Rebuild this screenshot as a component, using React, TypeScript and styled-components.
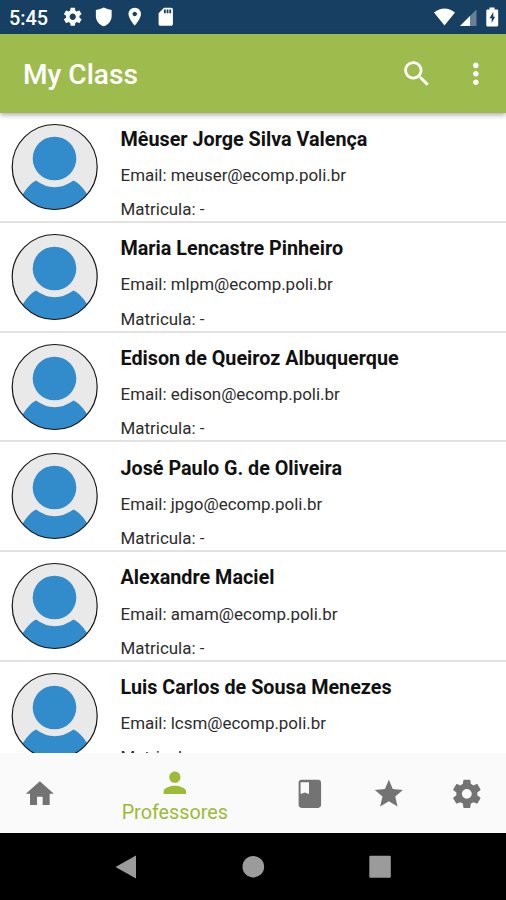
import React from "react";
import styled, { createGlobalStyle } from "styled-components";

const GlobalStyle = createGlobalStyle`
  * { box-sizing: border-box; }
  html, body { margin: 0; padding: 0; background: #fff; }
  body { font-family: Roboto, "Liberation Sans", sans-serif; overflow: hidden; }
`;

const Screen = styled.div`
  width: 506px;
  height: 900px;
  display: flex;
  flex-direction: column;
  overflow: hidden;
  background: #fff;
`;

const StatusBar = styled.header`
  flex: 0 0 34px;
  display: flex;
  align-items: center;
  justify-content: space-between;
  padding: 0 4px 0 9px;
  background: #163f62;
  color: #fff;
`;

const StatusGroup = styled.div<{ $gap: number }>`
  display: flex;
  align-items: center;
  gap: ${(p) => p.$gap}px;
`;

const Clock = styled.span`
  width: 43px;
  font-size: 19.9px;
  font-weight: 500;
  line-height: 28px;
  padding-top: 4px;
`;

const AppBar = styled.div`
  position: relative;
  z-index: 1;
  flex: 0 0 79px;
  display: flex;
  align-items: center;
  padding: 0 13px 0 23px;
  background: #9ebb4e;
  color: #fff;
  box-shadow: 0 2px 5px rgba(0, 0, 0, 0.32);
`;

const Title = styled.h1`
  flex: 1;
  margin: 0;
  padding-top: 3px;
  font-size: 28.1px;
  font-weight: 500;
  line-height: 36px;
`;

const Actions = styled.div`
  display: flex;
  gap: 26px;
`;

const List = styled.ul`
  flex: 1 1 0;
  min-height: 0;
  margin: 0;
  padding: 0.4px 0 0;
  list-style: none;
  overflow: hidden;
`;

const Row = styled.li`
  height: 109.7px;
  display: flex;
  gap: 21.5px;
  padding: 10px 0 0 11px;
  border-bottom: 2px solid #e2e2e2;
`;

const Details = styled.div`
  display: flex;
  flex-direction: column;
`;

const Name = styled.strong`
  margin-top: 3.2px;
  font-size: 19.75px;
  font-weight: 700;
  line-height: 26px;
  color: #111;
  white-space: nowrap;
`;

const Info = styled.span`
  margin-top: 10.2px;
  font-size: 16.96px;
  font-weight: 400;
  line-height: 24px;
  color: #2c2c2c;
  white-space: nowrap;
`;

const BottomNav = styled.nav`
  flex: 0 0 80px;
  display: flex;
  background: #fafafa;
`;

const Tab = styled.button<{ $active?: boolean }>`
  flex: ${(p) => (p.$active ? "1 1 0" : "0 0 78.7px")};
  display: flex;
  flex-direction: column;
  align-items: center;
  justify-content: ${(p) => (p.$active ? "flex-start" : "center")};
  padding: ${(p) => (p.$active ? "13px 0 0 1px" : "1px 0 0 1px")};
  border: 0;
  background: none;
  font: inherit;
  color: ${(p) => (p.$active ? "#9dba38" : "#737373")};
`;

const TabLabel = styled.span`
  font-size: 19.8px;
  line-height: 24px;
  margin-top: 1px;
`;

const SystemNav = styled.footer`
  flex: 0 0 67px;
  display: flex;
  justify-content: center;
  align-items: center;
  gap: 92.5px;
  background: #000;
  color: #9b9b9b;
`;

const Svg = styled.svg`
  display: block;
  flex: none;
  fill: currentColor;
`;

const GEAR =
  "M19.430 12.980c.04-.32.07-.64.07-.98s-.03-.66-.07-.98l2.110-1.650c.19-.15.24-.42.12-.64l-2-3.460c-.12-.22-.39-.3-.61-.22l-2.490 1c-.52-.4-1.080-.73-1.690-.98l-.38-2.650C14.460 2.180 14.250 2 14 2h-4c-.25 0-.46.18-.49.42l-.38 2.650c-.61.25-1.170.59-1.690.98l-2.490-1c-.23-.09-.49 0-.61.22l-2 3.460c-.13.22-.07.49.12.64l2.110 1.650c-.04.32-.07.65-.07.98s.03.66.07.98l-2.110 1.650c-.19.15-.24.42-.12.64l2 3.460c.12.22.39.3.61.22l2.490-1c.52.4 1.080.73 1.690.98l.38 2.650c.03.24.24.42.49.42h4c.25 0 .46-.18.49-.42l.38-2.650c.61-.25 1.170-.59 1.690-.98l2.490 1c.23.09.49 0 .61-.22l2-3.460c.12-.22.07-.49-.12-.64l-2.110-1.650zM12 15.500c-1.930 0-3.500-1.570-3.500-3.500s1.570-3.500 3.500-3.500 3.500 1.570 3.500 3.500-1.570 3.500-3.500 3.500z";
const SHIELD =
  "M12 1.800Q16 3.600 20.800 4.400V11.100C20.800 16.500 17 21 12 22.600 7 21 3.200 16.500 3.200 11.100V4.400Q8 3.600 12 1.800Z";
const PIN =
  "M12 2C8.130 2 5 5.130 5 9c0 5.250 7 13 7 13s7-7.750 7-13c0-3.870-3.130-7-7-7zm0 9.500c-1.380 0-2.500-1.120-2.500-2.500s1.120-2.500 2.500-2.500 2.500 1.120 2.500 2.500-1.120 2.500-2.500 2.500z";
const SD_CARD =
  "M18 2h-8L4.020 8 4 20c0 1.100.9 2 2 2h12c1.100 0 2-.9 2-2V4c0-1.100-.9-2-2-2zm-6 6h-2V4h2v4zm3 0h-2V4h2v4zm3 0h-2V4h2v4z";
const SEARCH =
  "M15.500 14h-.79l-.28-.27C15.410 12.590 16 11.110 16 9.500 16 5.910 13.090 3 9.500 3S3 5.910 3 9.500 5.910 16 9.500 16c1.610 0 3.090-.59 4.230-1.570l.27.28v.79l5 4.990L20.490 19l-4.990-5zm-6 0C7.010 14 5 11.990 5 9.500S7.010 5 9.500 5 14 7.010 14 9.500 11.990 14 9.500 14z";
const MORE =
  "M12 8c1.100 0 2-.9 2-2s-.9-2-2-2-2 .9-2 2 .9 2 2 2zm0 2c-1.100 0-2 .9-2 2s.9 2 2 2 2-.9 2-2-.9-2-2-2zm0 6c-1.100 0-2 .9-2 2s.9 2 2 2 2-.9 2-2-.9-2-2-2z";
const HOME = "M10 20v-6h4v6h5v-8h3L12 3 2 12h3v8z";
const PERSON =
  "M12 12c2.210 0 4-1.790 4-4s-1.790-4-4-4-4 1.790-4 4 1.790 4 4 4zm0 2c-2.670 0-8 1.340-8 4v2h16v-2c0-2.660-5.330-4-8-4z";
const BOOK =
  "M18 2H6c-1.100 0-2 .9-2 2v16c0 1.100.9 2 2 2h12c1.100 0 2-.9 2-2V4c0-1.100-.9-2-2-2zM5.400 3.800h6v8.400l-3-1.100-3 1.100V3.800z";
const STAR =
  "M12 17.270L18.180 21l-1.640-7.030L22 9.240l-7.190-.61L12 2 9.190 8.630 2 9.240l5.460 4.730L5.820 21z";

function Icon({ path, size = 33.7 }: { path: string; size?: number }) {
  return (
    <Svg width={size} height={size} viewBox="0 0 24 24" aria-hidden>
      <path d={path} />
    </Svg>
  );
}

function Avatar({ id }: { id: string }) {
  return (
    <Svg width="88" height="88" viewBox="0 0 88 88" aria-hidden>
      <clipPath id={id}>
        <circle cx="43.700" cy="44" r="42.500" />
      </clipPath>
      <circle cx="43.700" cy="44" r="42.500" fill="#e9e9e9" />
      <g clipPath={`url(#${id})`} fill="#328bca">
        <circle cx="43.500" cy="35.500" r="21.800" />
        <path d="M8 78C12 70 18 61 25 57.500Q43.500 71 62.500 57.500C70 61 76 70 80 78V88H8Z" />
      </g>
      <circle cx="43.700" cy="44" r="42.500" fill="none" stroke="#161616" strokeWidth="1.200" />
    </Svg>
  );
}

const teachers = [
  { name: "Mêuser Jorge Silva Valença", email: "meuser@ecomp.poli.br" },
  { name: "Maria Lencastre Pinheiro", email: "mlpm@ecomp.poli.br" },
  { name: "Edison de Queiroz Albuquerque", email: "edison@ecomp.poli.br" },
  { name: "José Paulo G. de Oliveira", email: "jpgo@ecomp.poli.br" },
  { name: "Alexandre Maciel", email: "amam@ecomp.poli.br" },
  { name: "Luis Carlos de Sousa Menezes", email: "lcsm@ecomp.poli.br" },
];

const tabs = [
  { id: "home", path: HOME },
  { id: "teachers", path: PERSON, label: "Professores" },
  { id: "subjects", path: BOOK },
  { id: "favorites", path: STAR },
  { id: "settings", path: GEAR },
];

export default function App() {
  return (
    <>
      <GlobalStyle />
      <Screen>
        <StatusBar>
          <StatusGroup $gap={9.5}>
            <Clock>5:45</Clock>
            <Icon path={GEAR} size={21.5} />
            <Icon path={SHIELD} size={21.5} />
            <Icon path={PIN} size={21.5} />
            <Icon path={SD_CARD} size={21.5} />
          </StatusGroup>
          <StatusGroup $gap={4}>
            <Svg width="23" height="20" viewBox="0 0 23 20">
              <path d="M1 5.500Q11.500-2.500 22 5.500L11.500 18.500Z" />
            </Svg>
            <Svg width="18" height="20" viewBox="0 0 18 20">
              <path d="M16.500 2.500V19H0Z" opacity="0.350" />
              <path d="M10 9V19H0Z" />
            </Svg>
            <Svg width="20" height="20" viewBox="0 0 20 20">
              <path
                fillRule="evenodd"
                d="M7.500 0.500h5v2h2.500a1.200 1.200 0 0 1 1.200 1.200v14.600a1.200 1.200 0 0 1-1.200 1.200h-9.500a1.200 1.200 0 0 1-1.200-1.200V3.700a1.200 1.200 0 0 1 1.200-1.200H7.500ZM11.300 5 7.500 11.200h2.200v4.800l3.400-6.300h-1.800Z"
              />
            </Svg>
          </StatusGroup>
        </StatusBar>
        <AppBar>
          <Title>My Class</Title>
          <Actions>
            <Icon path={SEARCH} />
            <Icon path={MORE} />
          </Actions>
        </AppBar>
        <List>
          {teachers.map((t, i) => (
            <Row key={t.email}>
              <Avatar id={`avatar-${i}`} />
              <Details>
                <Name>{t.name}</Name>
                <Info>Email: {t.email}</Info>
                <Info>Matricula: -</Info>
              </Details>
            </Row>
          ))}
        </List>
        <BottomNav>
          {tabs.map((tab) => (
            <Tab key={tab.id} $active={!!tab.label} aria-label={tab.id}>
              <Icon path={tab.path} />
              {tab.label && <TabLabel>{tab.label}</TabLabel>}
            </Tab>
          ))}
        </BottomNav>
        <SystemNav>
          <Svg width="34" height="34" viewBox="0 0 34 34">
            <path d="M5.500 17 26 5.500V28.500Z" />
          </Svg>
          <Svg width="34" height="34" viewBox="0 0 34 34">
            <circle cx="17.300" cy="16.700" r="10.800" />
          </Svg>
          <Svg width="34" height="34" viewBox="0 0 34 34">
            <rect x="6.300" y="5.700" width="21.500" height="22" rx="1" />
          </Svg>
        </SystemNav>
      </Screen>
    </>
  );
}
